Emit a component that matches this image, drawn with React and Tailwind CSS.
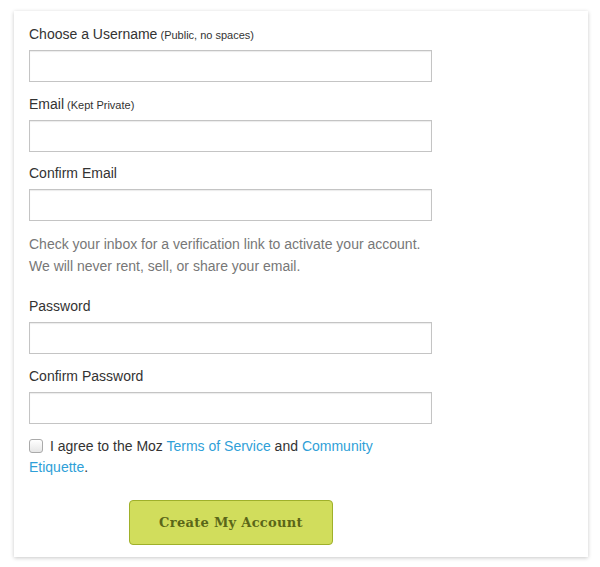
import React from 'react'

function Field({ label, note, type = 'text', className = '' }) {
  return (
    <div className={className}>
      <label className="block h-5 leading-5 text-[14px] text-[#333]">
        {label}
        {note && <span className="text-[11px] text-[#333]"> {note}</span>}
      </label>
      <input
        type={type}
        className="mt-1.5 block w-[403px] h-8 border border-[#c4c4c4] bg-white px-2 text-[14px] outline-none shadow-[inset_0_1px_1px_rgba(0,0,0,0.08)]"
      />
    </div>
  )
}

export default function App() {
  return (
    <div className="w-[600px] h-[567px] bg-white pt-[11px] pl-[14px] font-['Liberation_Sans',Arial,sans-serif]">
      <div className="w-[574px] h-[546px] bg-white shadow-[0_1px_4px_rgba(0,0,0,0.22)] px-[15px] pt-[13px]">
        <Field label="Choose a Username" note="(Public, no spaces)" />
        <Field label="Email" note="(Kept Private)" className="mt-3" />
        <Field label="Confirm Email" className="mt-[11px]" />

        <p className="mt-3 text-[14px] leading-[22px] text-[#777]">
          Check your inbox for a verification link to activate your account.<br />
          We will never rent, sell, or share your email.
        </p>

        <Field label="Password" type="password" className="mt-[19px]" />
        <Field label="Confirm Password" type="password" className="mt-3" />

        <div className="mt-3 flex items-start w-[360px] text-[14px] leading-[21px] text-[#333]">
          <p>
            <input
              type="checkbox"
              className="appearance-none align-[-2px] w-[14px] h-[14px] mr-[7px] rounded-[3px] border border-[#aaa] bg-gradient-to-b from-white to-[#e6e6e6]"
            />
            I agree to the Moz <a href="#" className="text-[#2f9fd8]">Terms of Service</a> and{' '}
            <a href="#" className="text-[#2f9fd8]">Community Etiquette</a>.
          </p>
        </div>

        <div className="mt-[22px] pl-[100px]">
          <button
            type="button"
            className="w-[204px] h-[45px] rounded-[4px] border border-[#9fb02a] bg-[#d1dd5c] text-[#5a6618] font-['DejaVu_Serif',serif] font-bold text-[13px] tracking-[0.3px]"
          >
            Create My Account
          </button>
        </div>
      </div>
    </div>
  )
}
